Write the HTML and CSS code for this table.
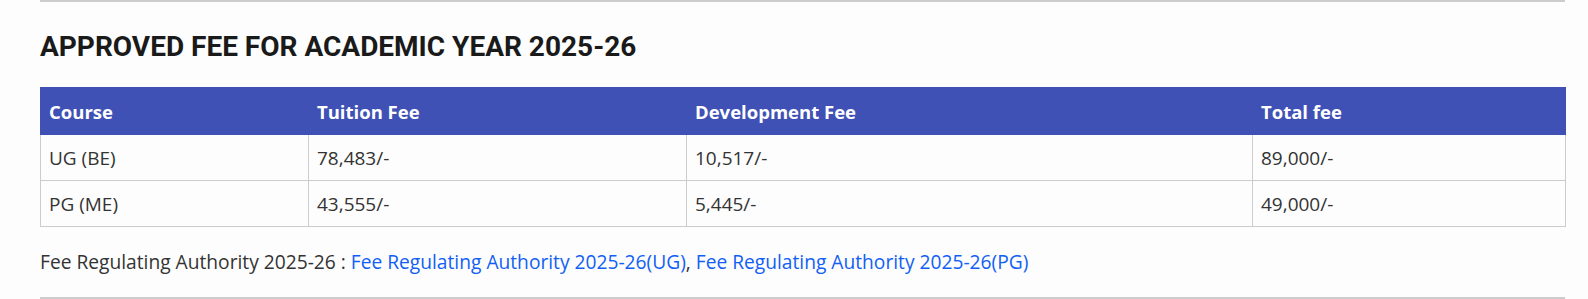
FILE: index.html
```html
<!DOCTYPE html>
<html lang="en">
<head>
<meta charset="utf-8">
<title>Approved Fee</title>
<link rel="stylesheet" href="styles.css">
</head>
<body>
<section class="fee">
  <hr class="rule">
  <h2 class="title">APPROVED FEE FOR ACADEMIC YEAR 2025-26</h2>
  <table class="fee-table">
    <colgroup>
      <col class="c1"><col class="c2"><col class="c3"><col class="c4">
    </colgroup>
    <thead>
      <tr><th>Course</th><th>Tuition Fee</th><th>Development Fee</th><th>Total fee</th></tr>
    </thead>
    <tbody>
      <tr><td>UG (BE)</td><td>78,483/-</td><td>10,517/-</td><td>89,000/-</td></tr>
      <tr><td>PG (ME)</td><td>43,555/-</td><td>5,445/-</td><td>49,000/-</td></tr>
    </tbody>
  </table>
  <p class="note">Fee Regulating Authority 2025-26 : <a href="#">Fee Regulating Authority 2025-26(UG)</a>, <a href="#">Fee Regulating Authority 2025-26(PG)</a></p>
  <hr class="rule">
</section>
</body>
</html>
```
FILE: styles.css
```css
html, body {
  margin: 0;
  padding: 0;
  background: #fdfdfd;
}
body {
  font-family: "Open Sans", "Noto Sans", sans-serif;
  color: #333333;
}
.fee {
  margin-left: 40px;
  width: 1525px;
}
.rule {
  margin: 0;
  border: 0;
  height: 2px;
  background: #cccccc;
}
.title {
  margin: 0 0 28px 0;
  padding-top: 28px;
  height: 57px;
  box-sizing: border-box;
  font-family: "Roboto", sans-serif;
  font-weight: 700;
  font-size: 28px;
  line-height: 34px;
  color: #1a1a1a;
}
.fee-table {
  width: 1525px;
  border-collapse: collapse;
  table-layout: fixed;
}
.c1 { width: 268px; }
.c2 { width: 378px; }
.c3 { width: 566px; }
.c4 { width: 313px; }
.fee-table th {
  background: #3f51b5;
  color: #ffffff;
  text-align: left;
  font-weight: 700;
  font-size: 18.5px;
  height: 46px;
  padding: 0 8px;
  border: 1px solid #3f51b5;
}
.fee-table td {
  height: 45px;
  padding: 0 8px;
  border: 1px solid #cccccc;
  font-size: 19px;
}
.note {
  margin: 0;
  height: 70px;
  line-height: 70px;
  font-size: 19.2px;
  white-space: nowrap;
}
.note a {
  color: #1160f5;
  text-decoration: none;
}
```
